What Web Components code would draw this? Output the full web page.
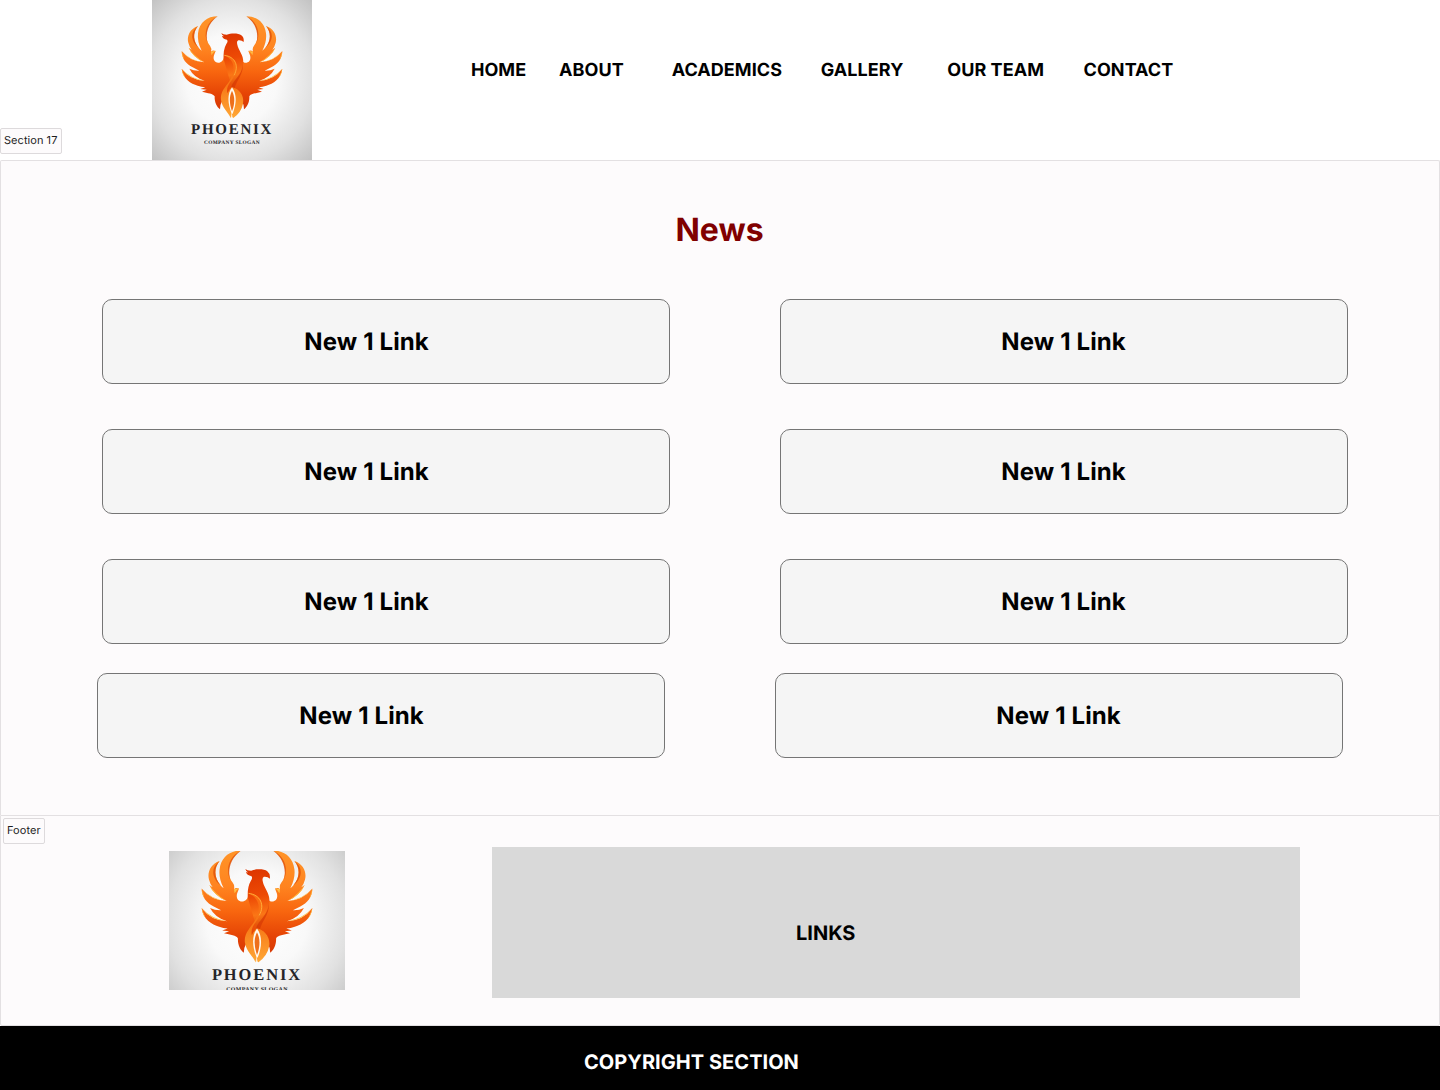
<!DOCTYPE html>
<html lang="en">
<head>
<meta charset="utf-8">
<title>News</title>
<style>
html,body{margin:0;padding:0}
body{width:1440px;height:1090px;overflow:hidden;background:#fff;font-family:Inter,"Liberation Sans",sans-serif;color:#000;text-rendering:geometricPrecision}
</style>
</head>
<body>
<news-page></news-page>
<script>
const define=(name,html)=>customElements.define(name,class extends HTMLElement{
  constructor(){super();this.attachShadow({mode:'open'}).innerHTML=html}
});

define('phoenix-logo',`
<style>
:host{display:block;flex:none;overflow:hidden}
svg{display:block;width:100%;height:100%}
text{font-family:"Liberation Serif",serif;fill:#252528}
</style>
<svg viewBox="0 0 480 480" preserveAspectRatio="xMidYMid slice">
<defs>
<radialGradient id="bg" gradientUnits="userSpaceOnUse" cx="240" cy="240" r="340"><stop offset="0" stop-color="#fff"/><stop offset=".4" stop-color="#f9f9f9"/><stop offset=".72" stop-color="#e1e1e1"/><stop offset="1" stop-color="#c2c2c2"/></radialGradient>
<linearGradient id="wing" gradientUnits="userSpaceOnUse" x1="0" y1="50" x2="0" y2="325"><stop offset="0" stop-color="#ff9428"/><stop offset=".35" stop-color="#ff8420"/><stop offset=".6" stop-color="#f8660f"/><stop offset=".85" stop-color="#e54305"/><stop offset="1" stop-color="#d83a05"/></linearGradient>
<linearGradient id="neck" gradientUnits="userSpaceOnUse" x1="225" y1="100" x2="255" y2="265"><stop offset="0" stop-color="#dd3500"/><stop offset=".45" stop-color="#ed4a05"/><stop offset=".75" stop-color="#fb7616"/><stop offset="1" stop-color="#d94305"/></linearGradient>
<linearGradient id="tail" gradientUnits="userSpaceOnUse" x1="0" y1="165" x2="0" y2="353"><stop offset="0" stop-color="#fb6b10"/><stop offset=".5" stop-color="#f77a18"/><stop offset="1" stop-color="#ffa735"/></linearGradient>
<g id="half">
<path fill="url(#wing)" d="M197 49C166 49 142 67 138 100Q135 125 149 152C128 135 117 104 138 78C113 86 104 110 109 128Q112 140 119 149L110 143Q122 171 157 187Q116 186 89 153C89 176 103 193 122 202L142 212Q127 213 112 206Q125 232 158 242Q114 240 89 206C92 236 117 251 137 257Q148 261 160 262L145 267L164 269L150 275C167 280 184 280 188 289C187 307 195 322 204 328Q204 314 209 306L242 264V197Q232 166 216 166Q216 186 202 188C188 190 182 178 186 166L191 153Q182 149 177 155Q180 145 174 137C153 112 163 69 197 49Z"/>
<path fill="#e05208" opacity=".85" d="M197 49C164 64 153 101 167 129C159 102 168 69 197 49ZM138 78C112 96 117 126 141 144C124 126 120 99 138 78Z"/>
<path fill="#ffc044" d="M89 153Q114 182 157 187Q116 186 89 153ZM89 154Q90 170 97 181Q94 169 89 154ZM89 206Q115 235 158 242Q114 240 89 206ZM89 206Q91 224 101 235Q94 222 89 206ZM110 143Q124 166 157 187Q122 171 110 143ZM177 155L191 152Q182 157 179 166Z"/>
</g>
</defs>
<path fill="url(#bg)" d="M0 0H480V480H0Z"/>
<use href="#half"/><use href="#half" transform="matrix(-1 0 0 1 480 0)"/>
<path fill="url(#neck)" d="M208 99Q212 104 224 104C237 99 260 99 268 106Q277 113 275 126Q269 120 259 121Q253 124 256 134C259 151 275 164 274 188C272 222 247 238 240 264L215 178Q213 149 223 132Q229 124 225 119Q212 117 210 108L216 109Q209 105 208 99Z"/>
<path fill="#cf3103" opacity=".55" d="M273 194C267 230 244 237 238 261L248 264C253 242 273 225 273 194Z"/>
<path fill="url(#tail)" d="M216 166C251 168 264 199 246 229C237 247 221 258 226 280Q232 266 240 262C260 265 278 286 273 311Q268 337 244 354Q240 350 236 354C228 335 211 325 207 300C204 276 220 262 232 244C253 210 249 180 216 166Z"/>
<path fill="none" stroke="#ffb13c" stroke-width="2.5" d="M217 166C250 170 262 198 246 226"/>
<path fill="#fffaf0" d="M240 262C225 282 227 311 239 341H242C254 311 255 282 240 262Z"/>
<path fill="#ee701b" d="M240 272C230 291 233 313 240 334C248 313 250 291 240 272Z"/>
<path fill="#fff" d="M239 337L242 355L236 354Z" opacity=".75"/>
<text x="117" y="403" font-size="45" font-weight="700" textLength="241" lengthAdjust="spacing">PHOENIX</text>
<text x="156" y="431" font-size="16" font-weight="700" textLength="167" lengthAdjust="spacing">COMPANY SLOGAN</text>
</svg>`);

define('site-header',`
<style>
:host{display:flex;height:160px;background:#fff;padding-left:152px;box-sizing:border-box}
phoenix-logo{width:160px;height:160px}
nav{display:grid;grid-template-columns:88.2px 112.6px 149.2px 126.4px 136.3px auto;margin-left:158.9px;padding-top:59px;height:24px;font:700 18px/24px Inter,sans-serif;letter-spacing:.06px;white-space:nowrap}
</style>
<phoenix-logo></phoenix-logo>
<nav><span>HOME</span><span>ABOUT</span><span>ACADEMICS</span><span>GALLERY</span><span>OUR TEAM</span><span>CONTACT</span></nav>`);

define('section-tag',`
<style>
:host{position:absolute;box-sizing:border-box;height:26px;border:1px solid #dddadc;border-radius:2px;background:#fdfbfc;padding:0 3px;font:400 11px/23px Inter,sans-serif;letter-spacing:.05px;color:#1e1e1e;white-space:nowrap}
</style><slot></slot>`);

define('news-link',`
<style>
:host{display:block;box-sizing:border-box;width:568px;height:85px;border:1px solid #757575;border-radius:10px;background:#f5f5f5;font:700 24px/83px Inter,sans-serif;letter-spacing:.05px;word-spacing:.3px;padding-left:var(--inset);white-space:nowrap}
</style><slot></slot>`);

define('news-row',`
<style>
:host{display:flex;gap:110px;height:85px}
.left{--inset:201.3px}
.right{--inset:220.3px}
</style>
<news-link class="left">New 1 Link</news-link><news-link class="right">New 1 Link</news-link>`);

define('news-section',`
<style>
:host{display:block;box-sizing:border-box;height:655px;border:1px solid #e3e0e2;border-bottom:0;border-radius:2px 2px 0 0;background:#fdfbfc;padding:48px 0 0 101px}
h1{margin:0 0 49px -101px;padding-right:1px;text-align:center;color:#800000;font:700 32px/41px Inter,sans-serif}
.rows{display:flex;flex-direction:column;gap:45px}
news-row.last{margin:-16px 0 0 -5px}
</style>
<h1>News</h1>
<div class="rows"><news-row></news-row><news-row></news-row><news-row></news-row><news-row class="last"></news-row></div>`);

define('site-footer',`
<style>
:host{display:block}
.main{display:flex;box-sizing:border-box;height:211px;border:1px solid #e3e0e2;border-radius:0 0 2px 2px;background:#fdfbfc;padding:31px 0 0 168px}
phoenix-logo{width:176px;height:139px;margin-top:4px}
.links{width:504px;height:151px;margin-left:147px;padding-left:304px;background:#d9d9d9;font:700 20px/172px Inter,sans-serif}
.copy{box-sizing:border-box;height:64px;background:#000;color:#fff;padding-left:584px;font:700 20px/72px Inter,sans-serif;letter-spacing:.04px}
</style>
<div class="main"><phoenix-logo></phoenix-logo><div class="links">LINKS</div></div>
<div class="copy">COPYRIGHT SECTION</div>`);

define('news-page',`
<style>
:host{display:block;position:relative;width:1440px;height:1090px}
.s{left:0;top:128px;width:62px}
.f{left:3px;top:818px;width:42px}
</style>
<site-header></site-header><news-section></news-section><site-footer></site-footer>
<section-tag class="s">Section 17</section-tag><section-tag class="f">Footer</section-tag>`);
</script>
</body>
</html>
